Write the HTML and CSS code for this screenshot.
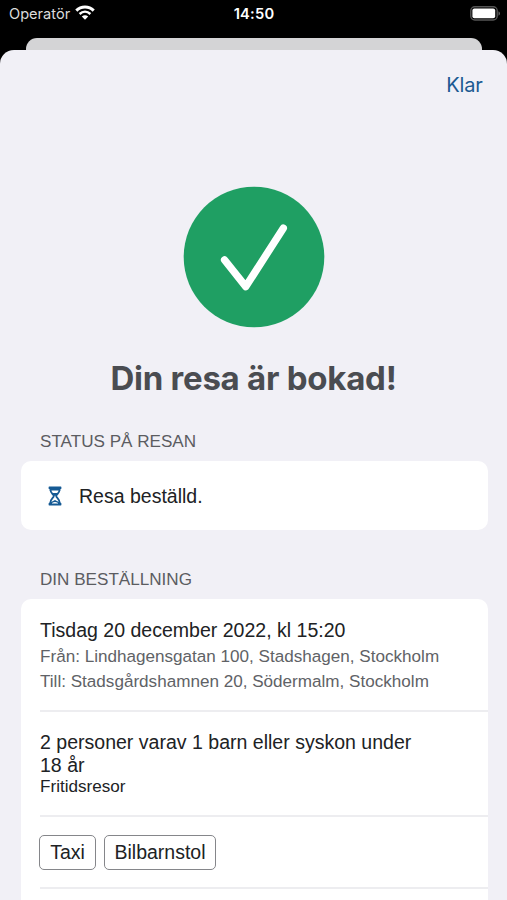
FILE: index.html
```html
<!DOCTYPE html>
<html lang="sv">
<head>
<meta charset="utf-8">
<meta name="viewport" content="width=device-width, initial-scale=1">
<title>Din resa är bokad!</title>
<link rel="stylesheet" href="styles.css">
</head>
<body>
<div class="phone">
  <header class="status-bar">
    <div class="carrier">
      <span class="carrier-name">Operatör</span>
      <svg class="wifi" viewBox="0 0 20 15" aria-hidden="true">
        <path d="M1.3 5.6C6.1.8 13.9.8 18.7 5.6" fill="none" stroke="#fff" stroke-width="3"/>
        <path d="M4.6 9C7.8 6 12.2 6 15.4 9" fill="none" stroke="#fff" stroke-width="2.5"/>
        <path d="M10 14.8L6.8 11.5C8.8 9.9 11.2 9.9 13.2 11.5Z" fill="#fff"/>
      </svg>
    </div>
    <time class="clock">14:50</time>
    <svg class="battery" viewBox="0 0 31 15" aria-hidden="true">
      <rect x=".8" y=".8" width="26.4" height="13.2" rx="4" fill="#000" stroke="#555" stroke-width="1.4"/>
      <rect x="2.4" y="2.4" width="22.8" height="9.8" rx="2" fill="#fff"/>
      <path d="M28.5 5.2C30.5 6.2 30.5 8.8 28.5 9.8Z" fill="#666"/>
    </svg>
  </header>
  <div class="sheet-behind"></div>
  <main class="sheet">
    <nav class="toolbar"><a class="done">Klar</a></nav>
    <svg class="success" viewBox="0 0 142 142" aria-hidden="true">
      <circle cx="71" cy="71" r="70.3" fill="#1f9f63"/>
      <path d="M41.6 74L62.8 100.6L100.3 42.2" fill="none" stroke="#fff" stroke-width="7.4" stroke-linecap="round" stroke-linejoin="round"/>
    </svg>
    <h1 class="title">Din resa är bokad!</h1>
    <h2 class="section-label">STATUS PÅ RESAN</h2>
    <section class="card status-card">
      <svg class="hourglass" viewBox="0 0 14 20" aria-hidden="true">
        <path d="M1.2 .6H12.8Q13.4.6 13.4 1.2V2.4Q13.4 3 12.4 3.2V4.6H1.6V3.2Q.6 3 .6 2.4V1.2Q.6.6 1.2.6Z" fill="#155a94"/>
        <path d="M2.5 4C2.5 7.4 5.8 8.2 5.8 10S2.5 12.6 2.5 16.8M11.5 4C11.5 7.4 8.2 8.2 8.2 10S11.5 12.6 11.5 16.8" fill="none" stroke="#155a94" stroke-width="1.8"/>
        <path d="M4 7H10L7.8 9.8H6.2Z" fill="#155a94"/>
        <path d="M.6 18.8V17.6Q.6 16.9 1.6 16.8V15.8H3.6L7 14L10.4 15.8H12.4V16.8Q13.4 16.9 13.4 17.6V18.8Q13.4 19.4 12.8 19.4H1.2Q.6 19.4.6 18.8Z" fill="#155a94"/>
        <path d="M4 16.9Q7 15.2 10 16.9V17.5H4Z" fill="#fff"/>
      </svg>
      <span class="status-text">Resa beställd.</span>
    </section>
    <h2 class="section-label order-label">DIN BESTÄLLNING</h2>
    <section class="card order-card">
      <div class="row trip">
        <p class="primary">Tisdag 20 december 2022, kl 15:20</p>
        <p class="address">Från: Lindhagensgatan 100, Stadshagen, Stockholm</p>
        <p class="address">Till: Stadsgårdshamnen 20, Södermalm, Stockholm</p>
      </div>
      <div class="row people">
        <p class="persons">2 personer varav 1 barn eller syskon under<br>18 år</p>
        <p class="kind">Fritidsresor</p>
      </div>
      <div class="row tags">
        <span class="tag tag-taxi">Taxi</span>
        <span class="tag tag-seat">Bilbarnstol</span>
      </div>
    </section>
  </main>
</div>
</body>
</html>
```
FILE: styles.css
```css
* { box-sizing: border-box; margin: 0; padding: 0; }

body {
  background: #000;
  font-family: "Liberation Sans", Arial, sans-serif;
  color: #202224;
  overflow: hidden;
}

.phone {
  width: 507px;
  height: 900px;
  display: flex;
  flex-direction: column;
  overflow: hidden;
}

.status-bar {
  height: 38px;
  flex: none;
  display: grid;
  grid-template-columns: 1fr auto 1fr;
  align-items: start;
  padding: 4px 6px 0 9px;
  font-family: Inter, sans-serif;
  color: #fff;
}

.carrier { display: flex; gap: 5px; }
.carrier-name { font-size: 14.6px; line-height: 20px; color: #dcdcdc; }
.wifi { width: 20px; height: 15px; margin-top: 1px; }
.clock { font-size: 14.7px; line-height: 20px; font-weight: 600; letter-spacing: .2px; margin-right: 2px; }
.battery { width: 31px; height: 15px; justify-self: end; margin-top: 2px; }

.sheet-behind {
  flex: none;
  height: 12px;
  margin: 0 25px 0 26px;
  background: #d4d4d6;
  border-radius: 11px 11px 0 0;
}

.sheet {
  flex: none;
  height: 850px;
  background: #f1f0f6;
  border-radius: 14px 14px 0 0;
  overflow: hidden;
}

.toolbar { height: 70px; padding: 22px 24.5px 0; text-align: right; }
.done { font: 20px/26px Inter, sans-serif; letter-spacing: -.2px; color: #1c5a92; }

.success { display: block; width: 142px; height: 142px; margin: 66px 0 0 183px; }

.title {
  margin-top: 27px;
  height: 46px;
  text-align: center;
  font: 700 33px/46px Inter, sans-serif;
  letter-spacing: -.25px;
  color: #4a4c51;
  white-space: nowrap;
}

.section-label {
  margin: 29px 0 0 40px;
  height: 24px;
  font-size: 17.1px;
  line-height: 24px;
  font-weight: 400;
  color: #5b5c61;
}

.card { margin: 0 19px 0 21px; background: #fff; border-radius: 10px; }

.status-card {
  margin-top: 7px;
  height: 69px;
  display: flex;
  align-items: center;
  padding-left: 27px;
  gap: 17px;
}
.hourglass { width: 14px; height: 20px; }
.status-text { font-size: 19.5px; line-height: 24px; }

.order-label { margin-top: 38px; }
.order-card { margin-top: 7px; height: 320px; border-radius: 10px 10px 0 0; padding-left: 19px; }

.row { border-bottom: 2px solid #ededf0; white-space: nowrap; }
.trip { height: 113px; padding-top: 18px; }
.primary { font-size: 19.55px; line-height: 26px; margin-bottom: 1px; }
.address { font-size: 17.1px; line-height: 25px; color: #606266; }
.people { height: 105px; padding-top: 19px; }
.persons { font-size: 19.55px; line-height: 23px; }
.kind { font-size: 17.1px; line-height: 20px; }
.tags { height: 72px; padding-top: 18px; display: flex; gap: 8px; }
.tag {
  height: 35px;
  margin-left: -1px;
  border: 1.5px solid #85868a;
  border-radius: 5px;
  font-size: 19.5px;
  line-height: 32px;
  text-align: center;
}
.tag-taxi { width: 57px; }
.tag-seat { width: 112px; margin-left: 0; }
```
